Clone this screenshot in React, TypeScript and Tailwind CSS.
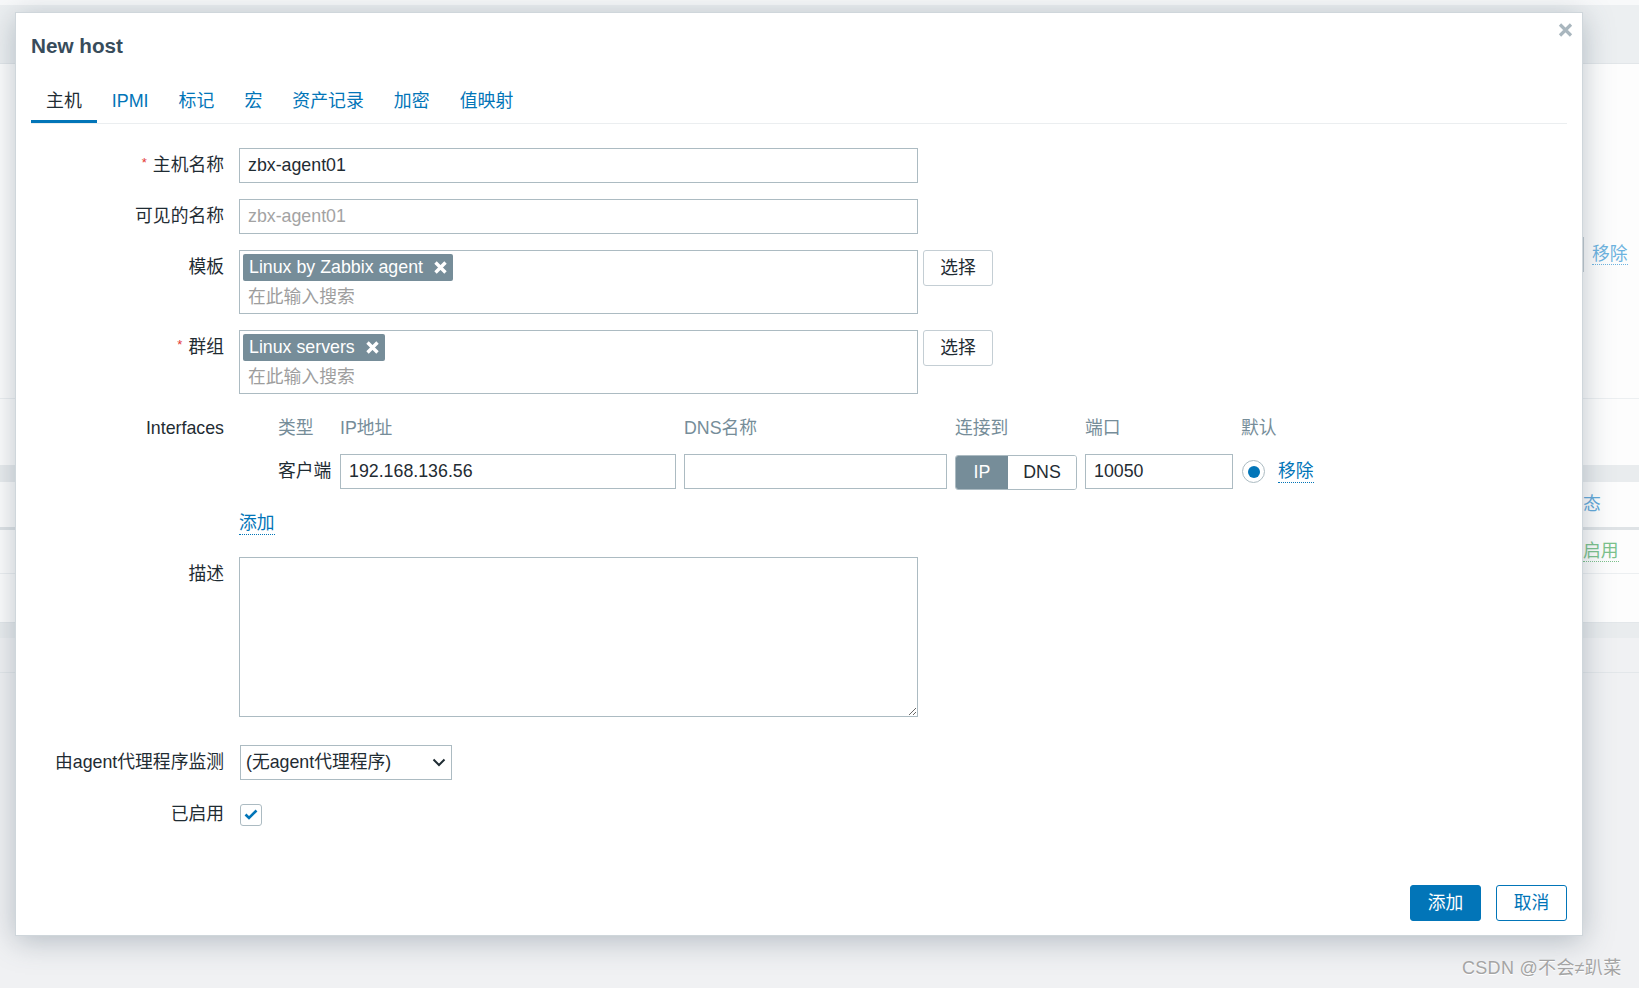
import React from 'react'

const labelCol = 'flex h-[35px] w-[193px] shrink-0 items-center justify-end'

export default function App() {
  return (
    <div className="relative h-[988px] w-full overflow-hidden bg-[#f0f1f3] font-['Liberation_Sans','Noto_Sans_CJK_SC',sans-serif] text-[17.8px] text-[#1f2c33]">
      <BackgroundPage />
      <HostDialog />
      {/* watermark */}
      <div className="absolute left-[1462px] top-[956px] text-[18px] leading-[24px] tracking-[0.3px] text-[#a4a4a4] [text-shadow:0_1px_0_#ffffff]">
        CSDN @不会≠趴菜
      </div>
    </div>
  )
}

function BackgroundPage() {
  return (
    <div className="flex flex-col">
      <div className="h-[5px] bg-[#f8f9fa]" />
      <div className="h-[59px] border-b border-[#e2e6e9] bg-[#eceff1]" />
      <div className="grid h-[334px] grid-cols-[1583px_1fr] bg-[#fdfdfd] pt-[173px]">
        <div />
        <div className="flex h-[35px] items-center">
          <div className="h-[35px] w-px bg-[#c3ccd2]" />
          <span className="ml-[8px] border-b border-dotted border-[#6db3e0] leading-[20px] text-[#6db3e0]">移除</span>
        </div>
      </div>
      <div className="h-[67px] border-t border-[#eceff1] bg-[#fdfdfd]" />
      <div className="h-[17px] bg-[#e9ecee]" />
      <div className="grid h-[45px] grid-cols-[1583px_1fr] items-center bg-[#fdfdfd]">
        <div />
        <span className="text-[#62a9da]">态</span>
      </div>
      <div className="h-[3px] bg-[#dfe3e6]" />
      <div className="grid h-[43px] grid-cols-[1583px_1fr] items-center bg-[#fdfdfd]">
        <div />
        <span className="w-fit border-b border-dotted border-[#7cc28c] leading-[20px] text-[#7cc28c]">启用</span>
      </div>
      <div className="h-[49px] border-t border-[#eceff1] bg-[#fdfdfd]" />
      <div className="h-[16px] border-t border-[#e3e7ea] bg-[#e9ecee]" />
      <div className="h-[35px] border-b border-[#e3e7ea]" />
    </div>
  )
}

function TagX() {
  return (
    <svg width="13" height="13" viewBox="0 0 13 13" className="ml-[11px]">
      <path d="M1.5 1.5 L11.5 11.5 M11.5 1.5 L1.5 11.5" stroke="#ffffff" strokeWidth="3.4" />
    </svg>
  )
}

function MultiSelect({ tag }: { tag: string }) {
  return (
    <div className="flex items-start">
      <div className="h-[64px] w-[679px] border border-[#acbbc2] bg-white pl-[3px] pt-[3px]">
        <div className="flex h-[27px] w-fit items-center rounded-[2px] bg-[#768d99] px-[6px] text-white">
          <span>{tag}</span>
          <TagX />
        </div>
        <div className="mt-[4px] pl-[5px] leading-[24px] text-[#9e9e9e]">在此输入搜索</div>
      </div>
      <button className="ml-[5px] h-[36px] w-[70px] rounded-[3px] border border-[#c4ced4] bg-white text-[#1f2c33]">
        选择
      </button>
    </div>
  )
}

function HostDialog() {
  const tabs = ['主机', 'IPMI', '标记', '宏', '资产记录', '加密', '值映射']
  return (
    <div className="absolute left-[15px] top-[12px] flex h-[924px] w-[1568px] flex-col border border-[#cfd6db] bg-white px-[15px] pt-[21px] shadow-[0_5px_28px_rgba(70,90,105,0.35)]">
      {/* close */}
      <button className="absolute right-[9px] top-[10px]">
        <svg width="15" height="14" viewBox="0 0 15 14">
          <path d="M2 1.5 L13 12.5 M13 1.5 L2 12.5" stroke="#a9b6be" strokeWidth="3.2" />
        </svg>
      </button>

      <h4 className="text-[20.7px] font-bold leading-[24px] text-[#384c5b]">New host</h4>

      {/* tabs */}
      <div className="mt-[32px] flex border-b border-[#ebeef0]">
        {tabs.map((t, i) => (
          <div
            key={t}
            className={
              i === 0
                ? 'border-b-[3px] border-[#0275b8] px-[15px] pb-[8px] text-[17.9px] leading-[22px] text-[#1f2c33]'
                : 'border-b-[3px] border-transparent px-[15px] pb-[8px] text-[17.9px] leading-[22px] text-[#0275b8]'
            }
          >
            {t}
          </div>
        ))}
      </div>

      {/* form */}
      <div className="mt-[24px] flex flex-col gap-[16px]">
        <div className="flex items-start">
          <div className={labelCol}>
            <span className="mr-[6px] -translate-y-[3px] text-[13px] leading-none text-[#e33734]">*</span>
            主机名称
          </div>
          <input
            className="ml-[15px] h-[35px] w-[679px] border border-[#acbbc2] px-[8px] text-[#1f2c33] outline-none"
            defaultValue="zbx-agent01"
          />
        </div>

        <div className="flex items-start">
          <div className={labelCol}>可见的名称</div>
          <input
            className="ml-[15px] h-[35px] w-[679px] border border-[#acbbc2] px-[8px] text-[#1f2c33] outline-none placeholder:text-[#a3a3a3]"
            placeholder="zbx-agent01"
          />
        </div>

        <div className="flex items-start">
          <div className={labelCol}>模板</div>
          <div className="ml-[15px]">
            <MultiSelect tag="Linux by Zabbix agent" />
          </div>
        </div>

        <div className="flex items-start">
          <div className={labelCol}>
            <span className="mr-[6px] -translate-y-[3px] text-[13px] leading-none text-[#e33734]">*</span>
            群组
          </div>
          <div className="ml-[15px]">
            <MultiSelect tag="Linux servers" />
          </div>
        </div>

        {/* interfaces */}
        <div className="flex items-start">
          <div className="flex h-[36px] w-[193px] shrink-0 items-center justify-end">Interfaces</div>
          <div className="ml-[15px] pl-[39px]">
            <div className="grid grid-cols-[54px_336px_263px_122px_148px_auto] gap-x-[8px] gap-y-[8px]">
              <div className="flex h-[36px] items-center text-[#768d99]">类型</div>
              <div className="flex h-[36px] items-center text-[#768d99]">IP地址</div>
              <div className="flex h-[36px] items-center text-[#768d99]">DNS名称</div>
              <div className="flex h-[36px] items-center text-[#768d99]">连接到</div>
              <div className="flex h-[36px] items-center text-[#768d99]">端口</div>
              <div className="flex h-[36px] items-center text-[#768d99]">默认</div>

              <div className="flex h-[35px] items-center whitespace-nowrap">客户端</div>
              <input
                className="h-[35px] w-full border border-[#acbbc2] px-[8px] text-[#1f2c33] outline-none"
                defaultValue="192.168.136.56"
              />
              <input className="h-[35px] w-full border border-[#acbbc2] px-[8px] outline-none" />
              <div className="mt-px flex h-[35px] overflow-hidden rounded-[3px] border border-[#acbbc2]">
                <div className="flex w-[52px] items-center justify-center bg-[#768d99] text-white">IP</div>
                <div className="flex flex-1 items-center justify-center bg-white text-[#1f2c33]">DNS</div>
              </div>
              <input
                className="h-[35px] w-full border border-[#acbbc2] px-[8px] text-[#1f2c33] outline-none"
                defaultValue="10050"
              />
              <div className="flex h-[35px] items-center">
                <div className="ml-px flex h-[23px] w-[23px] items-center justify-center rounded-full border border-[#acbbc2] bg-white">
                  <div className="h-[12px] w-[12px] rounded-full bg-[#0275b8]" />
                </div>
                <span className="ml-[13px] border-b border-dotted border-[#0275b8] leading-[21px] text-[#0275b8]">移除</span>
              </div>
            </div>
          </div>
        </div>

        <div className="flex h-[35px] items-center pl-[208px]">
          <span className="border-b border-dotted border-[#0275b8] leading-[22px] text-[#0275b8]">添加</span>
        </div>

        <div className="flex items-start">
          <div className={labelCol}>描述</div>
          <textarea className="ml-[15px] h-[160px] w-[679px] border border-[#acbbc2] px-[8px] py-[4px] outline-none" />
        </div>

        <div className="mt-[12px] flex items-start">
          <div className={labelCol}>由agent代理程序监测</div>
          <div className="ml-[16px] flex h-[35px] w-[212px] items-center justify-between border border-[#acbbc2] pl-[5px] pr-[5px]">
            <span>(无agent代理程序)</span>
            <svg width="14" height="9" viewBox="0 0 14 9">
              <path d="M1.5 1.5 L7 7 L12.5 1.5" fill="none" stroke="#1f2c33" strokeWidth="2" />
            </svg>
          </div>
        </div>

        <div className="mt-px flex items-start">
          <div className={labelCol}>已启用</div>
          <div className="ml-[16px] flex h-[35px] items-center">
            <div className="flex h-[22px] w-[22px] items-center justify-center rounded-[3px] border border-[#acbbc2] bg-white">
              <svg width="14" height="11" viewBox="0 0 14 11">
                <path d="M1.5 5.5 L5 9 L12.5 1.5" fill="none" stroke="#0275b8" strokeWidth="2.6" />
              </svg>
            </div>
          </div>
        </div>
      </div>

      {/* footer */}
      <div className="mt-auto flex justify-end gap-[15px] pb-[14px]">
        <button className="h-[36px] w-[71px] rounded-[3px] border border-[#0275b8] bg-[#0275b8] text-white">添加</button>
        <button className="h-[36px] w-[71px] rounded-[3px] border border-[#0275b8] bg-white text-[#0275b8]">取消</button>
      </div>
    </div>
  )
}
